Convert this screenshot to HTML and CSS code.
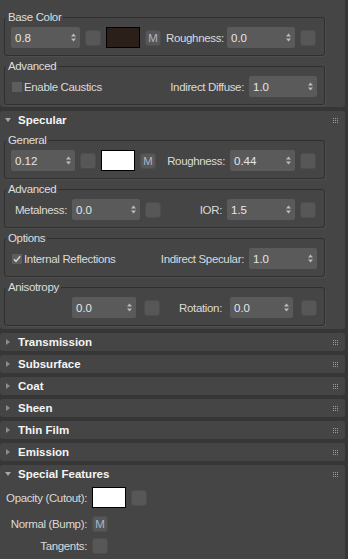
FILE: index.html
```html
<!DOCTYPE html>
<html lang="en">
<head>
  <meta charset="UTF-8" />
  <meta name="viewport" content="width=device-width, initial-scale=1.0" />
  <title>Physical Material</title>
  <link rel="stylesheet" href="styles.css">
</head>
<body>
  <svg class="defs" width="0" height="0">
    <symbol id="updown" viewBox="0 0 5 9"><path d="M2.5 0.5 5 3.5H0zM0 5.5h5L2.5 8.5z"/></symbol>
    <symbol id="tick" viewBox="0 0 10 10"><path d="M2 5.2l2 2.2L8.2 2.3" /></symbol>
  </svg>

  <div class="rollouts">
    <!-- basic parameters (scrolled, header out of view) -->
    <section class="rollout rollout-cut">
      <fieldset class="group">
        <legend>Base Color</legend>
        <div class="row">
          <div class="spin w69">0.8<svg class="ud"><use href="#updown"/></svg></div>
          <div class="btn"></div>
          <div class="swatch swatch-dark"></div>
          <div class="btn btn-m">M</div>
          <span class="lbl lbl-left w56">Roughness:</span>
          <div class="spin w68">0.0<svg class="ud"><use href="#updown"/></svg></div>
          <div class="btn"></div>
        </div>
      </fieldset>
      <fieldset class="group">
        <legend>Advanced</legend>
        <div class="row">
          <label class="check"><span class="box"></span>Enable Caustics</label>
          <span class="lbl push">Indirect Diffuse:</span>
          <div class="spin w68">1.0<svg class="ud"><use href="#updown"/></svg></div>
        </div>
      </fieldset>
    </section>

    <section class="rollout open">
      <div class="head">Specular</div>
      <div class="body">
        <fieldset class="group">
          <legend>General</legend>
          <div class="row">
            <div class="spin w64">0.12<svg class="ud"><use href="#updown"/></svg></div>
            <div class="btn"></div>
            <div class="swatch swatch-white"></div>
            <div class="btn btn-m">M</div>
            <span class="lbl w64">Roughness:</span>
            <div class="spin w65">0.44<svg class="ud"><use href="#updown"/></svg></div>
            <div class="btn"></div>
          </div>
        </fieldset>
        <fieldset class="group">
          <legend>Advanced</legend>
          <div class="row">
            <span class="lbl w56">Metalness:</span>
            <div class="spin w68">0.0<svg class="ud"><use href="#updown"/></svg></div>
            <div class="btn"></div>
            <span class="lbl w56">IOR:</span>
            <div class="spin w68">1.5<svg class="ud"><use href="#updown"/></svg></div>
            <div class="btn"></div>
          </div>
        </fieldset>
        <fieldset class="group">
          <legend>Options</legend>
          <div class="row">
            <label class="check"><span class="box"><svg class="tk"><use href="#tick"/></svg></span>Internal Reflections</label>
            <span class="lbl push">Indirect Specular:</span>
            <div class="spin w68">1.0<svg class="ud"><use href="#updown"/></svg></div>
          </div>
        </fieldset>
        <fieldset class="group">
          <legend>Anisotropy</legend>
          <div class="row row-wide">
            <div class="spin w64 indent">0.0<svg class="ud"><use href="#updown"/></svg></div>
            <div class="btn"></div>
            <span class="lbl push">Rotation:</span>
            <div class="spin w63">0.0<svg class="ud"><use href="#updown"/></svg></div>
            <div class="btn"></div>
          </div>
        </fieldset>
      </div>
    </section>

    <section class="rollout"><div class="head">Transmission</div></section>
    <section class="rollout"><div class="head">Subsurface</div></section>
    <section class="rollout"><div class="head">Coat</div></section>
    <section class="rollout"><div class="head">Sheen</div></section>
    <section class="rollout"><div class="head">Thin Film</div></section>
    <section class="rollout"><div class="head">Emission</div></section>

    <section class="rollout open rollout-last">
      <div class="head">Special Features</div>
      <div class="body body-special">
        <div class="frow">
          <span class="flbl">Opacity (Cutout):</span>
          <div class="swatch swatch-white"></div>
          <div class="btn"></div>
        </div>
        <div class="frow frow-small">
          <span class="flbl">Normal (Bump):</span>
          <div class="btn btn-m">M</div>
        </div>
        <div class="frow frow-small frow-last">
          <span class="flbl">Tangents:</span>
          <div class="btn"></div>
        </div>
      </div>
    </section>
  </div>
</body>
</html>
```

FILE: styles.css
```css
body {
  margin: 0; overflow: hidden;
  background: #363636; color: #dadada;
  font: 11.5px/14px "Liberation Sans", Arial, sans-serif;
  letter-spacing: -0.35px;
}
.defs { position: absolute; }

.rollouts { width: 345px; display: flex; flex-direction: column; gap: 4px; }
.rollout { background: #454545; border-radius: 3px; }
.rollout-cut { border-radius: 0 0 3px 3px; padding: 10px 0 2px; }
.rollout-last { flex: 1; min-height: 120px; }

.head {
  height: 18px; display: flex; align-items: center;
  font-weight: bold; font-size: 11.5px; color: #f4f4f4; letter-spacing: 0;
}
.head::before {
  content: ""; flex: none;
  border-left: 4px solid #8c8c8c;
  border-top: 3px solid transparent; border-bottom: 3px solid transparent;
  margin: 0 8px 0 6px;
}
.open .head::before {
  border-left: 3px solid transparent; border-right: 3px solid transparent;
  border-top: 4px solid #a8a8a8; border-bottom: 0;
  margin: 0 7px 0 5px;
}
.head::after {
  content: ""; margin-left: auto; margin-right: 7px;
  width: 6px; height: 5px;
  background: conic-gradient(#9c9c9c 25%, transparent 0) 0 0 / 2px 2px;
}

.body { padding: 4px 0 3px; }

.group {
  width: 321px; box-sizing: border-box; min-inline-size: 0;
  margin: 0 0 0 4px; padding: 3px 7px 7px 6px;
  border: 1px solid #2f2f2f; border-radius: 3px;
  box-shadow: 1px 1px 0 #4e4e4e;
}
.group + .group { margin-top: 3px; }
.group legend { padding: 0 2px; margin-left: -5px; line-height: 14px; color: #dedede; }

.row { display: flex; align-items: center; gap: 5px; height: 21px; }
.row-wide { gap: 8px; }
.push { margin-left: auto; }
.indent { margin-left: 61px; }

.spin {
  flex: none; height: 21px; box-sizing: border-box;
  display: flex; align-items: center; padding: 0 4px;
  background: #5a5a5a; border-radius: 2px; color: #e6e6e6;
  letter-spacing: 0;
}
.spin .ud { width: 5px; height: 9px; margin-left: auto; fill: #bcbcbc; }
.w56 { width: 56px; }
.w63 { width: 63px; }
.w64 { width: 64px; }
.w65 { width: 65px; }
.w68 { width: 68px; }
.w69 { width: 69px; }

.lbl { flex: none; white-space: nowrap; text-align: right; }
.lbl-left { text-align: left; }

.btn {
  flex: none; width: 16px; height: 16px; box-sizing: border-box;
  background: #575757; border: 1px solid #4d4d4d; border-radius: 3px;
}
.btn-m {
  display: flex; align-items: center; justify-content: center;
  color: #a9b6cc; letter-spacing: 0;
}

.swatch { flex: none; width: 34px; height: 21px; box-sizing: border-box; border: 1px solid #000; }
.swatch-dark { background: #2b1f19; }
.swatch-white { background: #fff; }

.check { display: flex; align-items: center; gap: 2px; margin-left: 1px; white-space: nowrap; }
.box { width: 10px; height: 10px; background: #5d5d5d; display: flex; }
.tk { width: 10px; height: 10px; fill: none; stroke: #d2d2d2; stroke-width: 1.6; }

.body-special { padding-top: 4px; }
.frow { display: flex; align-items: center; gap: 5px; height: 21px; }
.frow-small { height: 16px; margin-top: 8px; }
.frow-last { margin-top: 6px; }
.flbl { width: 87px; flex: none; text-align: right; white-space: nowrap; }
```
